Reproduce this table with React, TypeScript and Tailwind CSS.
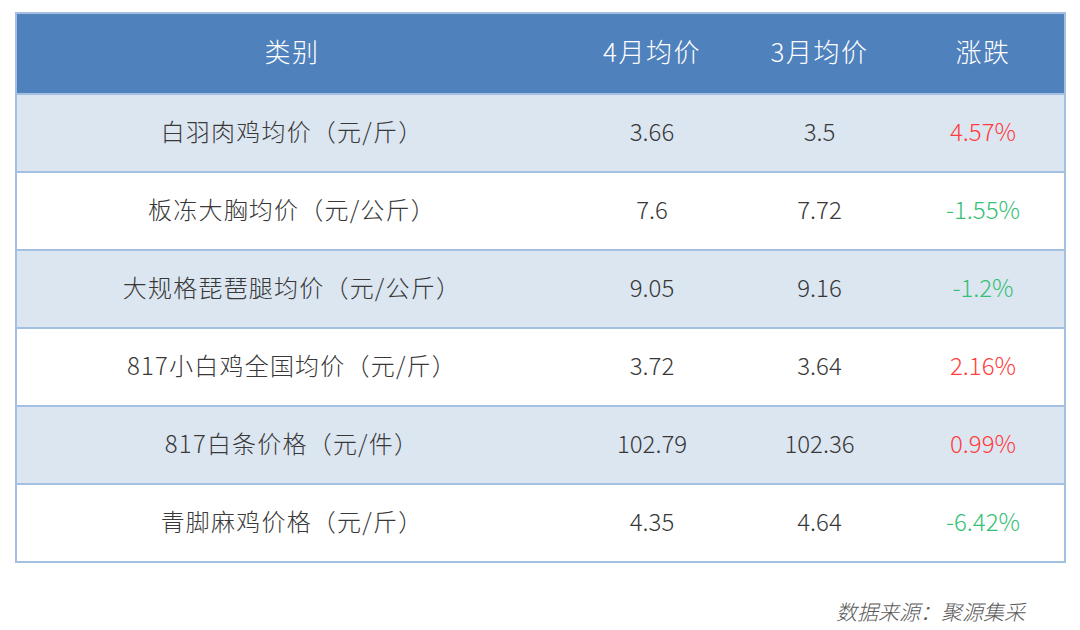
import React from "react";

const rows = [
  { name: "白羽肉鸡均价（元/斤）", apr: "3.66", mar: "3.5", chg: "4.57%", up: true },
  { name: "板冻大胸均价（元/公斤）", apr: "7.6", mar: "7.72", chg: "-1.55%", up: false },
  { name: "大规格琵琶腿均价（元/公斤）", apr: "9.05", mar: "9.16", chg: "-1.2%", up: false },
  { name: "817小白鸡全国均价（元/斤）", apr: "3.72", mar: "3.64", chg: "2.16%", up: true },
  { name: "817白条价格（元/件）", apr: "102.79", mar: "102.36", chg: "0.99%", up: true },
  { name: "青脚麻鸡价格（元/斤）", apr: "4.35", mar: "4.64", chg: "-6.42%", up: false },
];

export default function App() {
  return (
    <div
      className="w-[1080px] h-[630px] bg-white overflow-hidden"
      style={{ fontFamily: '"Noto Sans CJK SC", "Noto Sans", sans-serif' }}
    >
      <div className="pt-[12px] pl-[15px]">
        <div className="w-[1051px] border-2 border-[#a3bfe2]">
          <div className="grid grid-cols-[550px_170px_165px_162px] h-[79px] pb-[6px] items-center bg-[#4f81bd] text-white text-[26px] tracking-[1.5px] font-light">
            <div className="text-center">类别</div>
            <div className="text-center">4月均价</div>
            <div className="text-center">3月均价</div>
            <div className="text-center">涨跌</div>
          </div>
          {rows.map((r, i) => (
            <div
              key={i}
              className={
                "grid grid-cols-[550px_170px_165px_162px] h-[78px] pb-[4px] items-center border-t-2 border-[#a3bfe2] text-[24px] font-light text-[#383838] " +
                (i % 2 === 0 ? "bg-[#dce6f1]" : "bg-white")
              }
            >
              <div className="text-center tracking-[1.2px]">{r.name}</div>
              <div className="text-center">{r.apr}</div>
              <div className="text-center">{r.mar}</div>
              <div className={"text-center " + (r.up ? "text-[#ff3d3d]" : "text-[#35bf74]")}>{r.chg}</div>
            </div>
          ))}
        </div>
      </div>
      <div className="flex justify-end pr-[55px] mt-[33px]">
        <span className="italic text-[21px] font-light text-[#5a5a5a]">数据来源：聚源集采</span>
      </div>
    </div>
  );
}
